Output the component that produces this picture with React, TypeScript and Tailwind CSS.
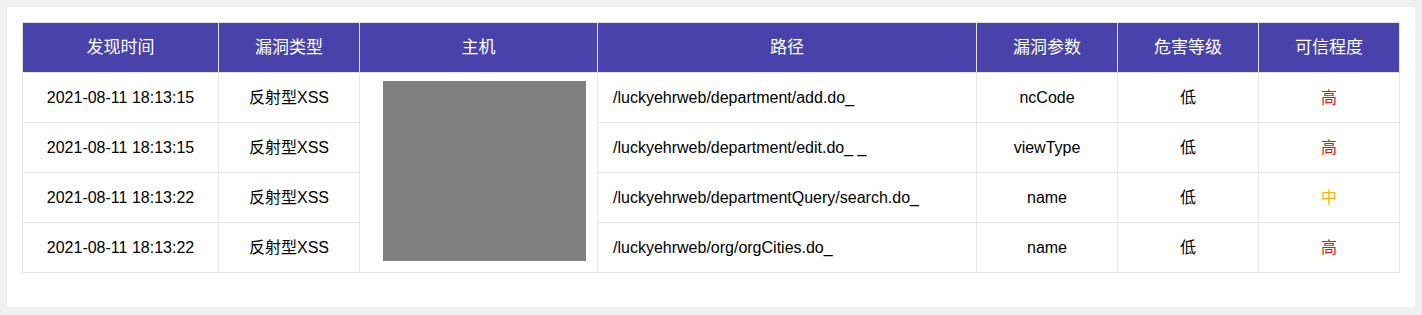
const rows = [
  { time: '2021-08-11 18:13:15', type: '反射型XSS', path: '/luckyehrweb/department/add.do_', param: 'ncCode', level: '低', trust: '高' },
  { time: '2021-08-11 18:13:15', type: '反射型XSS', path: '/luckyehrweb/department/edit.do_ _', param: 'viewType', level: '低', trust: '高' },
  { time: '2021-08-11 18:13:22', type: '反射型XSS', path: '/luckyehrweb/departmentQuery/search.do_', param: 'name', level: '低', trust: '中' },
  { time: '2021-08-11 18:13:22', type: '反射型XSS', path: '/luckyehrweb/org/orgCities.do_', param: 'name', level: '低', trust: '高' },
];

const headers = ['发现时间', '漏洞类型', '主机', '路径', '漏洞参数', '危害等级', '可信程度'];
const widths = ['w-[196px]', 'w-[141px]', 'w-[238px]', 'w-[379px]', 'w-[141px]', 'w-[141px]', 'w-[141px]'];

export default function App() {
  return (
    <div className="min-h-[315px] bg-[#f0f0f0] p-[7px] font-['Liberation_Sans','Noto_Sans_CJK_SC',sans-serif]">
      <div className="bg-white rounded-[3px] px-[15px] pt-[15px] pb-[35px] h-[300px]">
        <table className="table-fixed border-collapse w-[1378px] text-[16px] text-black">
          <thead>
            <tr className="h-[50px] bg-[#4842aa] text-white text-[17px]">
              {headers.map((h, i) => (
                <th key={h} className={`${widths[i]} font-normal border border-[#e3e3e3]`}>
                  {h}
                </th>
              ))}
            </tr>
          </thead>
          <tbody>
            {rows.map((r, i) => (
              <tr key={i} className="h-[50px]">
                <td className="border border-[#e5e5e5] text-center">{r.time}</td>
                <td className="border border-[#e5e5e5] text-center">{r.type}</td>
                {i === 0 && (
                  <td rowSpan={4} className="border border-[#e5e5e5] align-top pl-[23px] pt-[8px]">
                    <div className="w-[203px] h-[180px] bg-[#808080]" />
                  </td>
                )}
                <td className="border border-[#e5e5e5] pl-[15px]">{r.path}</td>
                <td className="border border-[#e5e5e5] text-center">{r.param}</td>
                <td className="border border-[#e5e5e5] text-center">{r.level}</td>
                <td className={`border border-[#e5e5e5] text-center ${r.trust === '中' ? 'text-[#f5b418]' : 'text-[#ee1111]'}`}>
                  {r.trust}
                </td>
              </tr>
            ))}
          </tbody>
        </table>
      </div>
    </div>
  );
}
